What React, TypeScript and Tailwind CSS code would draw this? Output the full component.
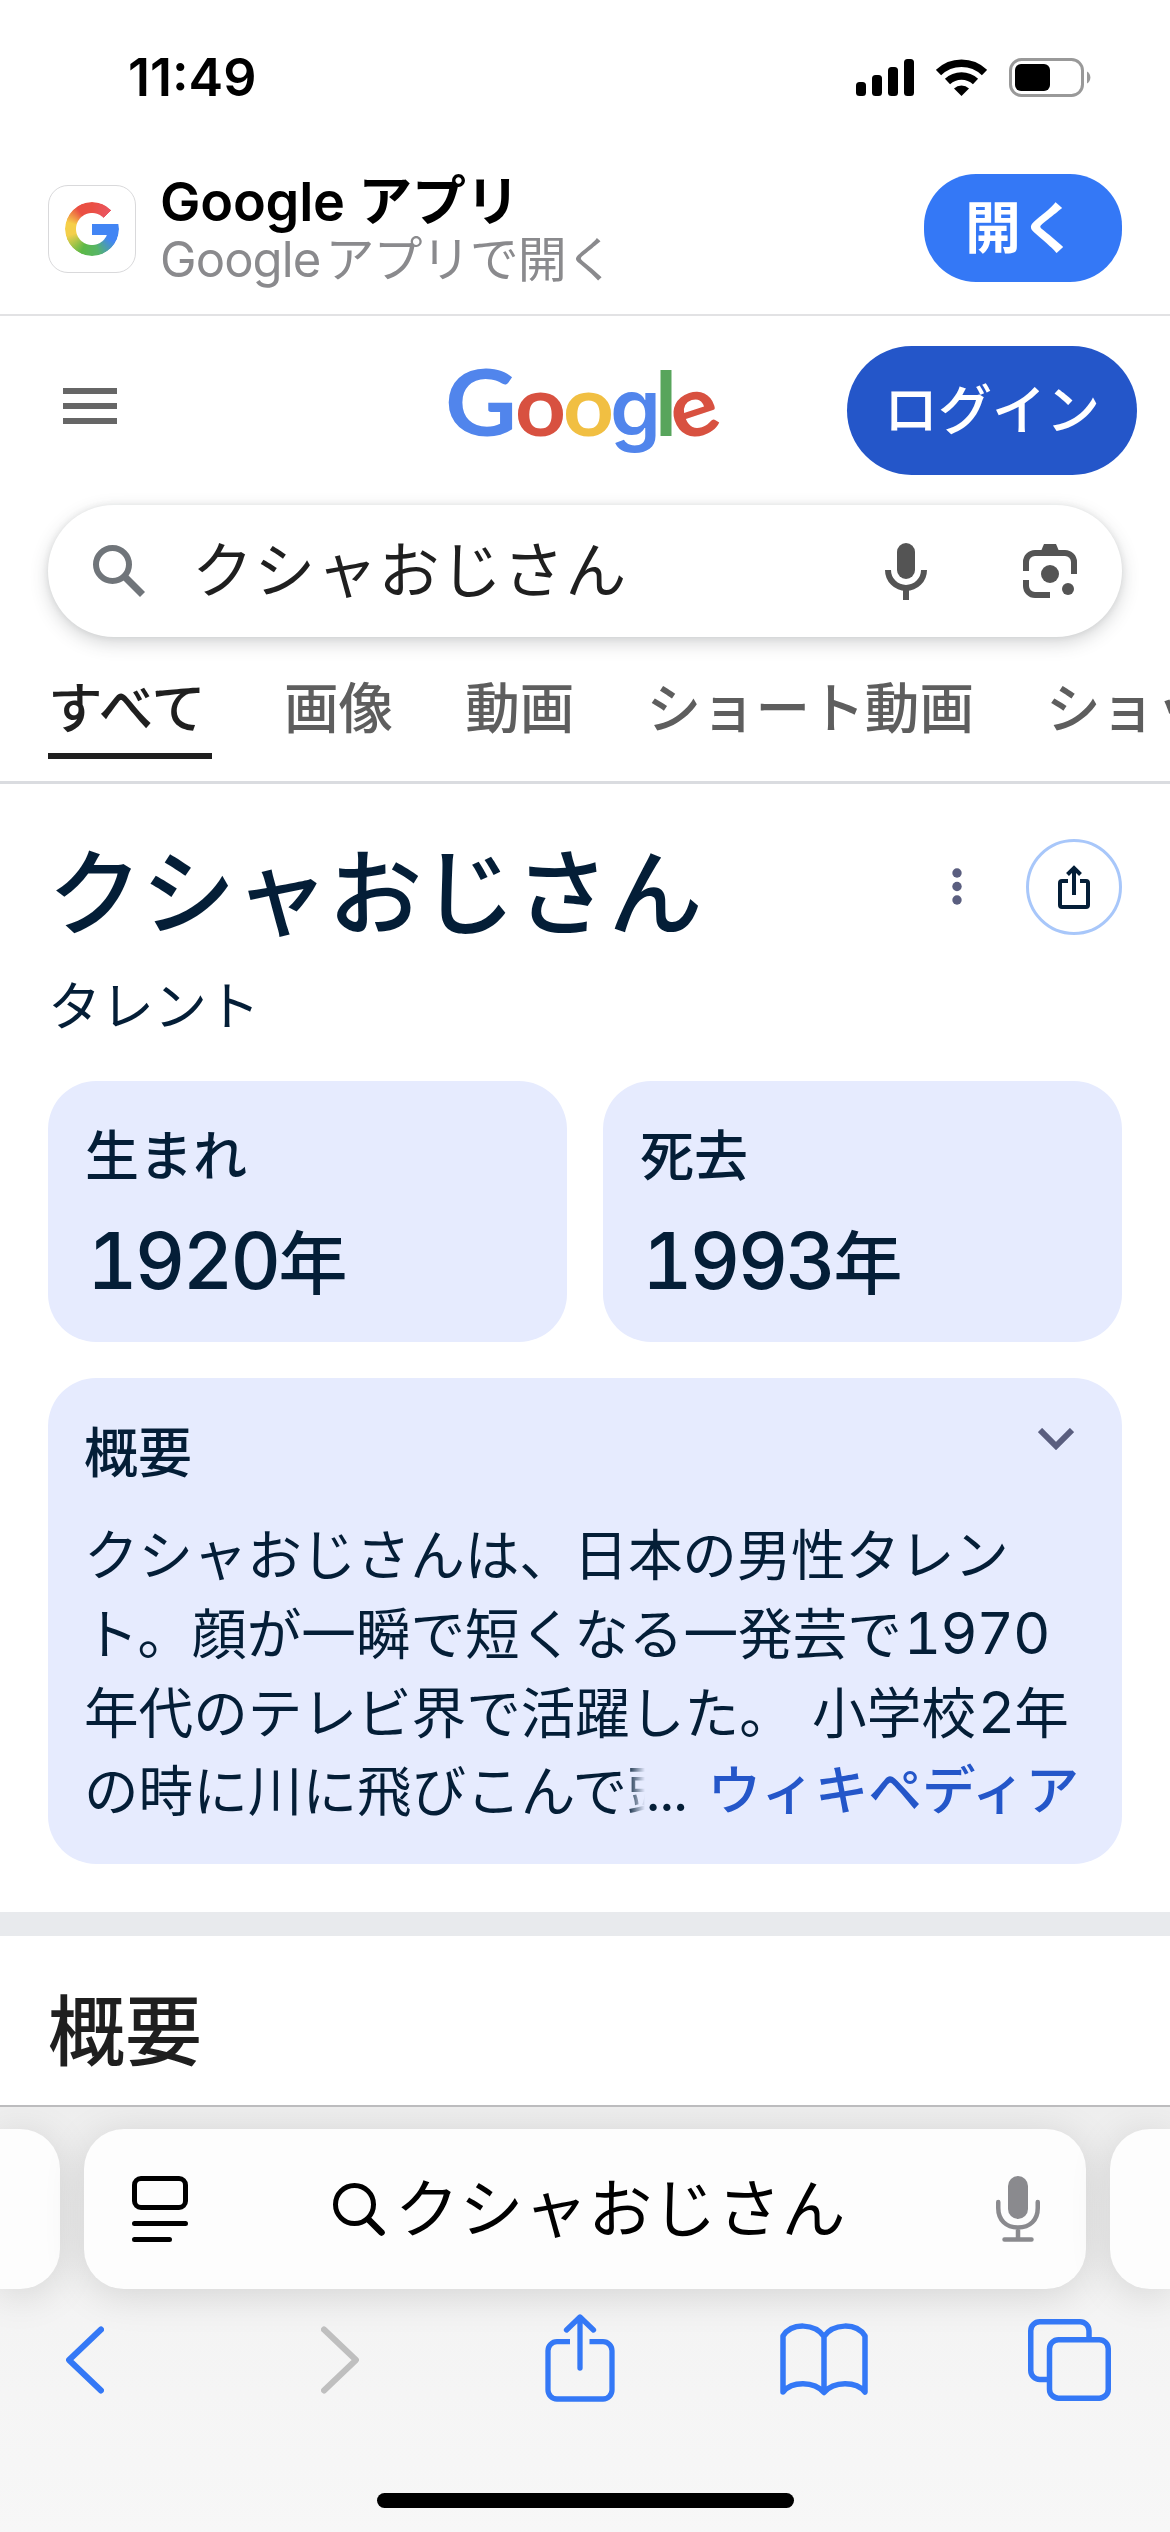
import type { ReactNode } from 'react';

const tabs = ['画像', '動画', 'ショート動画', 'ショッピング'];

const facts = [
    { label: '生まれ', year: '1920' },
    { label: '死去', year: '1993' },
];

function Num({ children }: { children: ReactNode }) {
    return <span className="font-['Inter'] text-[1.06em] tabular-nums tracking-[-0.02em] ml-[2px]">{children}</span>;
}

function StatusBar() {
    return (
        <div className="h-[156px] flex justify-between pl-[128px] pr-[79px]">
            <span className="font-['Inter'] font-semibold text-[52px] leading-[156px]">11:49</span>
            <div className="flex gap-[22px] h-[39px] mt-[58px]">
                <svg width="58" height="39" viewBox="0 0 58 39">
                    <rect x="0" y="24" width="10" height="14" rx="3.5" />
                    <rect x="16" y="17" width="10" height="21" rx="3.5" />
                    <rect x="32" y="9" width="10" height="29" rx="3.5" />
                    <rect x="48" y="1" width="10" height="37" rx="3.5" />
                </svg>
                <svg width="51" height="39" viewBox="0 0 51 39">
                    <path d="M2.5 14.5A33 33 0 0 1 48.5 14.5" fill="none" stroke="black" strokeWidth="7.5" />
                    <path d="M11.5 23.5A20.5 20.5 0 0 1 39.5 23.5" fill="none" stroke="black" strokeWidth="7.5" />
                    <path d="M18 30.5A11 11 0 0 1 33 30.5L25.5 38z" />
                </svg>
                <svg width="82" height="39" viewBox="0 0 82 39">
                    <rect x="1.5" y="1.5" width="72" height="36" rx="11" fill="none" stroke="#999999" strokeWidth="3" />
                    <rect x="6" y="6" width="35" height="27" rx="6" />
                    <path d="M78 13.5a7 7 0 0 1 0 12z" fill="#999999" />
                </svg>
            </div>
        </div>
    );
}

function AppBanner() {
    return (
        <div className="h-[160px] shrink-0 flex items-start border-b-[2px] border-[#e2e2e4] px-[48px] pt-[18px]">
            <div className="w-[88px] h-[88px] mt-[11px] rounded-[20px] border border-[#d9d9db] flex items-center justify-center">
                <div className="relative w-[54px] h-[54px]">
                    <div className="w-full h-full rounded-full bg-[conic-gradient(#ea4f43_0deg,#ea5560_45deg,transparent_45.5deg,transparent_79deg,#4285f4_79.5deg,#4285f4_120deg,#56b567_165deg,#5cb947_205deg,#f3cf4b_255deg,#f6cf48_285deg,#ea4f43_325deg,#ea4f43_360deg)] [mask:radial-gradient(circle,transparent_15.5px,black_16.5px)]" />
                    <div className="absolute left-[27px] top-[22px] w-[26px] h-[11px] bg-[#4285f4]" />
                </div>
            </div>
            <div className="ml-[24px] flex flex-col whitespace-nowrap">
                <span className="font-semibold text-[54px] leading-[56px] tracking-[-0.2px]">Google アプリ</span>
                <span className="text-[49px] leading-[60px] tracking-[-0.9px] text-[#8a8a8d]">Google<span className="ml-[5px]">アプリで開く</span></span>
            </div>
            <button className="ml-auto w-[198px] h-[108px] rounded-[52px] bg-[#3478f6] text-white font-bold text-[56px] leading-[105px] pr-[4px] cursor-pointer">開く</button>
        </div>
    );
}

function Logo() {
    return (
        <svg width="274" height="100" viewBox="0 0 274 100" className="font-['Lato'] font-bold overflow-visible">
            <text x="-2" y="75" fontSize="92" fill="#5185ec" textLength="72" lengthAdjust="spacingAndGlyphs">G</text>
            <text x="68" y="75" fontSize="84" fill="#d85140" textLength="51" lengthAdjust="spacingAndGlyphs">o</text>
            <text x="116" y="75" fontSize="84" fill="#f1bf42" textLength="51" lengthAdjust="spacingAndGlyphs">o</text>
            <text x="163" y="75" fontSize="79" fill="#5185ec" textLength="51" lengthAdjust="spacingAndGlyphs" className="font-['Inter'] font-semibold">g</text>
            <text x="208" y="75" fontSize="88" fill="#58a55c" textLength="22" lengthAdjust="spacingAndGlyphs">l</text>
            <text x="224" y="75" fontSize="84" fill="#d85140" textLength="48" lengthAdjust="spacingAndGlyphs" transform="rotate(-18 248 54)">e</text>
        </svg>
    );
}

function SearchHeader() {
    return (
        <>
            <div className="h-[189px] shrink-0 flex items-start pl-[63px] pr-[33px] pt-[30px]">
                <div className="w-[54px] mt-[42px] flex flex-col gap-[9px]">
                    <div className="h-[6px] bg-[#666666]" />
                    <div className="h-[6px] bg-[#666666]" />
                    <div className="h-[6px] bg-[#666666]" />
                </div>
                <div className="ml-[330px] mt-[15px]"><Logo /></div>
                <button className="ml-auto w-[290px] h-[129px] rounded-full bg-[#2456c9] text-white font-medium text-[54px] leading-[121px] cursor-pointer">ログイン</button>
            </div>
            <div className="mx-[48px] h-[132px] shrink-0 rounded-full bg-white shadow-[0_6px_18px_rgba(60,64,67,0.22),0_0_6px_rgba(60,64,67,0.1)] flex items-center px-[45px]">
                <svg width="52" height="52" viewBox="0 0 52 52" fill="none" stroke="#70757a">
                    <circle cx="19.5" cy="19.5" r="16.5" strokeWidth="6" />
                    <path d="M32 32L49.5 49.5" strokeWidth="7" />
                </svg>
                <span className="ml-[47px] text-[61px] leading-[132px] tracking-[1.2px] text-[#1f1f1f]">クシャおじさん</span>
                <svg className="ml-auto mr-[96px]" width="42" height="57" viewBox="0 0 42 57" fill="#545454">
                    <rect x="12" y="0" width="18" height="36" rx="9" />
                    <path d="M3 27a18 18 0 0 0 36 0" fill="none" stroke="#545454" strokeWidth="6" />
                    <rect x="18" y="45" width="6" height="12" />
                </svg>
                <svg width="54" height="54" viewBox="0 0 54 54" fill="#545454">
                    <path d="M18 7L21 0H33L36 7z" />
                    <path d="M3 27V18a9 9 0 0 1 9-9H42a9 9 0 0 1 9 9V30M3 36V42a9 9 0 0 0 9 9H27" fill="none" stroke="#545454" strokeWidth="6" />
                    <circle cx="27" cy="30" r="9" />
                    <circle cx="45" cy="45" r="6" />
                </svg>
            </div>
            <div className="h-[147px] shrink-0 border-b-[3px] border-[#dadce0] pl-[48px] flex gap-[72px] overflow-hidden whitespace-nowrap text-[54.6px] leading-[78px] pt-[32px] font-medium text-[#5e5e5e]">
                <span className="w-[164px] shrink-0 h-[90px] border-b-[6px] border-[#1f1f1f] text-[#1f1f1f]">すべて</span>
                {tabs.map((tab) => <span key={tab}>{tab}</span>)}
            </div>
        </>
    );
}

function KnowledgePanel() {
    return (
        <div className="px-[48px] text-[#041e37] h-[1128px] shrink-0 flex flex-col">
            <div className="flex items-center h-[96px] mt-[55px]">
                <h1 className="font-medium text-[94px] leading-[96px] tracking-[-0.6px] mt-[14px]">クシャおじさん</h1>
                <svg className="ml-auto mr-[64px]" width="10" height="38" viewBox="0 0 10 38" fill="#5a5e7f">
                    <circle cx="5" cy="5" r="4.7" />
                    <circle cx="5" cy="18.5" r="4.7" />
                    <circle cx="5" cy="32" r="4.7" />
                </svg>
                <div className="w-[96px] h-[96px] rounded-full border-[3px] border-[#a8c7fa] flex items-center justify-center">
                    <svg width="32" height="44" viewBox="0 0 32 44" fill="none" stroke="#041e37" strokeWidth="4">
                        <path d="M10 16H4a2 2 0 0 0-2 2V40a2 2 0 0 0 2 2H28a2 2 0 0 0 2-2V18a2 2 0 0 0-2-2H22M16 30V3M9.5 9.5L16 3L22.5 9.5" />
                    </svg>
                </div>
            </div>
            <p className="mt-[32px] text-[53px] leading-[80px]">タレント</p>
            <div className="mt-[34px] grid grid-cols-2 gap-[36px]">
                {facts.map((fact) => (
                    <div key={fact.label} className="h-[261px] rounded-[48px] bg-[#e6ebfe] px-[37px] pt-[37px]">
                        <div className="font-medium text-[54px] leading-[78px]">{fact.label}</div>
                        <div className="font-medium text-[69px] leading-[96px] mt-[17px]">
                            <span className="font-['Inter'] text-[78px] tabular-nums tracking-[-2.7px] ml-[2px]">{fact.year}</span>年
                        </div>
                    </div>
                ))}
            </div>
            <div className="mt-[36px] h-[486px] rounded-[48px] bg-[#e6ebfe] pl-[36px] pr-[43px] pt-[37px]">
                <div className="flex justify-between items-start">
                    <span className="font-medium text-[54px] leading-[78px]">概要</span>
                    <svg className="mt-[13px] mr-[5px]" width="36" height="22" viewBox="0 0 36 22" fill="none" stroke="#5a5e7f" strokeWidth="6">
                        <path d="M2 2L18 18L34 2" />
                    </svg>
                </div>
                <div className="mt-[23px] text-[54.6px] leading-[78px] whitespace-nowrap">
                    <div className="tracking-[-0.2px]">クシャおじさんは、日本の男性タレン</div>
                    <div>ト。顔が一瞬で短くなる一発芸で<Num>1970</Num></div>
                    <div className="[word-spacing:3px]">年代のテレビ界で活躍した。 小学校<Num>2</Num>年</div>
                    <div className="flex">
                        <span>の時に川に飛びこんで</span>
                        <span className="w-[18px] overflow-hidden [mask-image:linear-gradient(to_right,black,transparent)]">頭</span>
                        <span className="font-['Inter'] tracking-[-2px]">...</span>
                        <a className="ml-auto font-medium text-[53.6px] text-[#2456c9]">ウィキペディア</a>
                    </div>
                </div>
            </div>
        </div>
    );
}

function BottomBar() {
    return (
        <div className="relative h-[427px] shrink-0 border-t-[2px] border-[#bcbcbe] bg-linear-to-b from-[#eeeeee] via-[#f4f4f4] to-[#f7f7f7] overflow-hidden">
            <div className="flex gap-[24px] mt-[22px]">
                <div className="w-[60px] h-[160px] rounded-r-[40px] bg-[#fdfdfd] shadow-[0_6px_40px_rgba(0,0,0,0.13)]" />
                <div className="w-[1002px] h-[160px] rounded-[40px] bg-[#fdfdfd] shadow-[0_6px_40px_rgba(0,0,0,0.13)] flex items-center pl-[48px] pr-[46px]">
                    <svg width="56" height="66" viewBox="0 0 56 66" fill="none" stroke="black" strokeWidth="5" strokeLinecap="round">
                        <rect x="2.5" y="2.5" width="51" height="29" rx="6.5" />
                        <path d="M2.5 47.5H53.5M2.5 63.5H37.5" />
                    </svg>
                    <svg className="ml-[145px]" width="52" height="53" viewBox="0 0 52 53" fill="none" stroke="black" strokeLinecap="round">
                        <circle cx="21.5" cy="21.5" r="19" strokeWidth="5" />
                        <path d="M36 37L48.5 49.5" strokeWidth="6.5" />
                    </svg>
                    <span className="ml-[10px] text-[64px] leading-[160px] tracking-[0.4px]">クシャおじさん</span>
                    <svg className="ml-auto" width="44" height="66" viewBox="0 0 44 66" fill="none" stroke="#8a8a8e" strokeWidth="4.5" strokeLinecap="round">
                        <rect x="12" y="0" width="20" height="43" rx="10" fill="#8a8a8e" stroke="none" />
                        <path d="M2.25 26V32C2.25 44 10 51.5 22 51.5S41.75 44 41.75 32V26M22 52V63M8.5 63.5H35.5" />
                    </svg>
                </div>
                <div className="w-[60px] h-[160px] rounded-l-[40px] bg-[#fdfdfd] shadow-[0_6px_40px_rgba(0,0,0,0.13)]" />
            </div>
            <div className="flex items-start pl-[66px] pt-[25px]">
                <svg className="mt-[12px]" width="38" height="68" viewBox="0 0 38 68" fill="none" stroke="#3478f6" strokeWidth="6" strokeLinecap="round" strokeLinejoin="round">
                    <path d="M35 3.5L3 34L35 64.5" />
                </svg>
                <svg className="mt-[12px] ml-[217px]" width="38" height="68" viewBox="0 0 38 68" fill="none" stroke="#bfbfbf" strokeWidth="6" strokeLinecap="round" strokeLinejoin="round">
                    <path d="M3 3.5L35 34L3 64.5" />
                </svg>
                <svg className="ml-[186px]" width="70" height="88" viewBox="0 0 70 88" fill="none" stroke="#3478f6" strokeWidth="5.3" strokeLinecap="round" strokeLinejoin="round">
                    <path strokeLinecap="butt" d="M25 27.7H12a9 9 0 0 0-9 9V76a9 9 0 0 0 9 9H58a9 9 0 0 0 9-9V36.7a9 9 0 0 0-9-9H44.5" />
                    <path d="M35 54V4M21.5 16L35 3L48.5 16" />
                </svg>
                <svg className="mt-[9px] ml-[165px]" width="88" height="74" viewBox="0 0 88 74" fill="none" stroke="#3478f6" strokeWidth="5.5" strokeLinejoin="round">
                    <path d="M44 13.5C35 .5 12 -1 3 13V69C12 58 34 58 44 69.5C54 58 76 58 85 69V13C76 -1 53 .5 44 13.5V69.5" />
                </svg>
                <svg className="mt-[5px] ml-[160px]" width="83" height="82" viewBox="0 0 83 82" fill="none" stroke="#3478f6" strokeWidth="5.5">
                    <path d="M19 60.5H11.75a9 9 0 0 1-9-9V11.75a9 9 0 0 1 9-9H52a9 9 0 0 1 9 9V19" />
                    <rect x="21.5" y="20.7" width="58.75" height="58.5" rx="9" />
                </svg>
            </div>
            <div className="absolute left-[377px] bottom-[24px] w-[417px] h-[15px] rounded-full bg-black" />
        </div>
    );
}

export default function App() {
    return (
        <div lang="ja" className="w-[1170px] h-[2532px] overflow-hidden bg-white text-black flex flex-col font-['Inter','Noto_Sans_CJK_JP',sans-serif]">
            <StatusBar />
            <AppBanner />
            <SearchHeader />
            <KnowledgePanel />
            <div className="h-[24px] shrink-0 bg-[#e8eaed]" />
            <div className="h-[169px] shrink-0 px-[48px] pt-[44px]">
                <h2 className="font-medium text-[77px] leading-[104px] text-[#1f1f1f]">概要</h2>
            </div>
            <BottomBar />
        </div>
    );
}
